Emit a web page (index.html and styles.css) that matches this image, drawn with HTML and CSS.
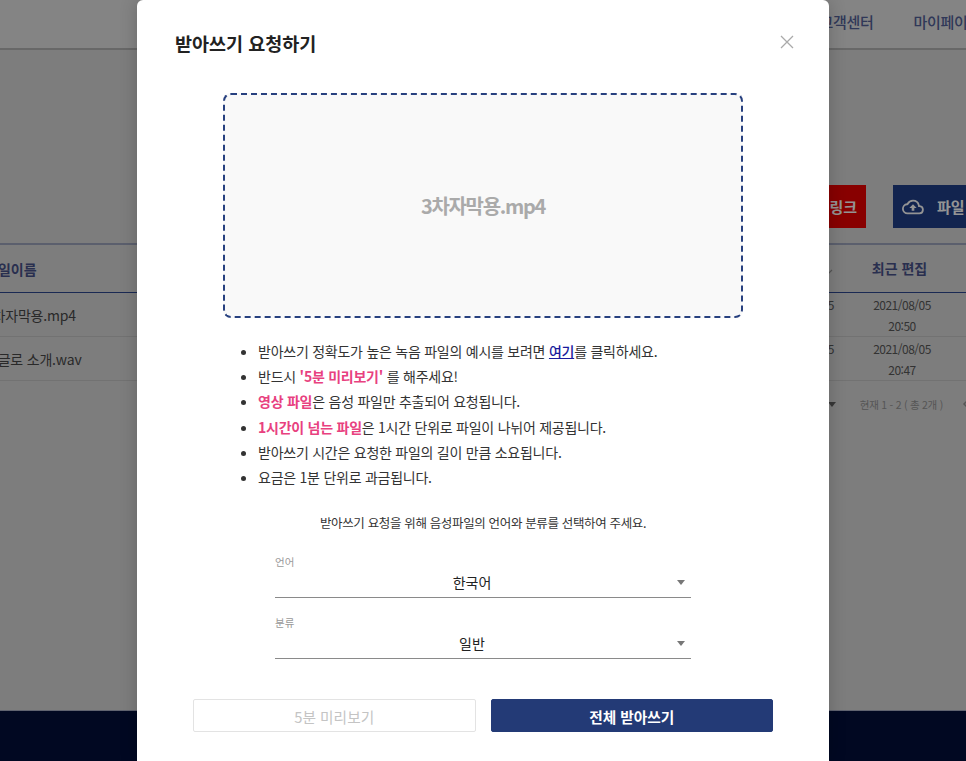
FILE: index.html
```html
<!DOCTYPE html>
<html lang="ko">
<head>
<meta charset="utf-8">
<title>받아쓰기 요청하기</title>
<link rel="stylesheet" href="styles.css">
</head>
<body>
<div class="page">
  <header class="topbar">
    <nav class="nav">
      <a class="nav-item">고객센터</a>
      <a class="nav-item">마이페이지</a>
    </nav>
  </header>
  <main class="main">
    <div class="toolbar">
      <button class="tool-btn tool-red">유튜브 링크</button>
      <button class="tool-btn tool-blue">
        <svg class="cloud" viewBox="0 0 24 24" width="22" height="22" aria-hidden="true"><path d="M19.35 10.04A7.49 7.49 0 0 0 12 4a7.5 7.5 0 0 0-6.65 4.04A6 6 0 0 0 6 20h13a5 5 0 0 0 .35-9.96zM19 18H6a4 4 0 0 1-.43-7.98l1.07-.11.5-.95A5.47 5.47 0 0 1 12 6a5.5 5.5 0 0 1 5.39 4.42l.3 1.5 1.53.11A3 3 0 0 1 19 18zM8 13h2.55v3h2.9v-3H16l-4-4z" fill="currentColor"/></svg>
        <span>파일 업로드</span>
      </button>
    </div>
    <div class="table">
      <div class="thead">
        <span class="cell-name">파일이름</span>
        <span class="cell-date sort"><svg viewBox="0 0 8 5" width="8" height="5" aria-hidden="true"><path d="M1 1l3 3 3-3" fill="none" stroke="currentColor" stroke-width="1.2"/></svg></span>
        <span class="cell-edit">최근 편집</span>
      </div>
      <div class="trow">
        <span class="cell-name">3차자막용.mp4</span>
        <span class="cell-date">2021/08/05<br>20:50</span>
        <span class="cell-edit">2021/08/05<br>20:50</span>
      </div>
      <div class="trow">
        <span class="cell-name">한글로 소개.wav</span>
        <span class="cell-date">2021/08/05<br>20:47</span>
        <span class="cell-edit">2021/08/05<br>20:47</span>
      </div>
      <div class="pager">
        <i class="pager-arrow"></i>
        <span class="pager-text">현재 1 - 2 ( 총 2개 )</span>
        <svg class="pager-prev" viewBox="0 0 10 12" width="10" height="12" aria-hidden="true"><path d="M7 1 2 6l5 5" fill="none" stroke="currentColor" stroke-width="1.5"/></svg>
      </div>
    </div>
  </main>
  <footer class="footer"></footer>
</div>

<div class="overlay"></div>

<section class="modal">
  <div class="modal-head">
    <h2 class="modal-title">받아쓰기 요청하기</h2>
    <svg class="modal-close" viewBox="0 0 14 14" width="14" height="14" aria-hidden="true"><path d="M1 1l12 12M13 1 1 13" fill="none" stroke="currentColor" stroke-width="1.3"/></svg>
  </div>
  <div class="dropzone">3차자막용.mp4</div>
  <ul class="notes">
    <li>받아쓰기 정확도가 높은 녹음 파일의 예시를 보려면 <a class="link">여기</a>를 클릭하세요.</li>
    <li>반드시 <b class="pink">'5분 미리보기'</b> 를 해주세요!</li>
    <li><b class="pink">영상 파일</b>은 음성 파일만 추출되어 요청됩니다.</li>
    <li><b class="pink">1시간이 넘는 파일</b>은 1시간 단위로 파일이 나뉘어 제공됩니다.</li>
    <li>받아쓰기 시간은 요청한 파일의 길이 만큼 소요됩니다.</li>
    <li>요금은 1분 단위로 과금됩니다.</li>
  </ul>
  <p class="guide">받아쓰기 요청을 위해 음성파일의 언어와 분류를 선택하여 주세요.</p>
  <div class="fields">
    <div class="field">
      <label class="field-label">언어</label>
      <div class="select">한국어</div>
    </div>
    <div class="field">
      <label class="field-label">분류</label>
      <div class="select">일반</div>
    </div>
  </div>
  <div class="actions">
    <button class="btn btn-off">5분 미리보기</button>
    <button class="btn btn-on">전체 받아쓰기</button>
  </div>
</section>
</body>
</html>
```

FILE: styles.css
```css
* { box-sizing: border-box; }
html, body { margin: 0; height: 761px; overflow: hidden; }
body {
  position: relative;
  font-family: "Noto Sans CJK KR", "Noto Sans", sans-serif;
  color: #222;
  background: #c0c0c0;
}

/* page behind the dialog */
.page { display: flex; flex-direction: column; height: 761px; overflow: hidden; background: #c0c0c0; }
.topbar {
  height: 50px;
  flex: none;
  background: #cbcbcb;
  border-bottom: 2px solid #a0a0a0;
  display: flex;
  justify-content: flex-end;
  overflow: hidden;
}
.nav { display: flex; gap: 40px; margin-right: -15px; padding-top: 10px; }
.nav-item { font-size: 15px; line-height: 24px; font-weight: 500; color: #4a5688; white-space: nowrap; letter-spacing: -0.3px; }
.main { flex: 1; overflow: hidden; }
.toolbar {
  display: flex;
  justify-content: flex-end;
  gap: 27px;
  margin-top: 135px;
  margin-right: -76px;
}
.tool-btn {
  height: 43px;
  border: 0;
  font: 700 15px/43px "Noto Sans CJK KR", sans-serif;
  color: #e4e4e4;
  white-space: nowrap;
}
.tool-red { width: 140px; background: #d20000; text-align: right; padding: 0 9px 0 0; }
.tool-blue { width: 149px; background: #1c387a; display: flex; align-items: center; gap: 13px; padding: 0 0 0 9px; }
.cloud { flex: none; }
.table { margin: 15px 0 0 -15px; border-top: 2px solid #8c92a8; }
.thead, .trow { display: flex; align-items: center; }
.thead { height: 48px; border-bottom: 1px solid #284080; font-size: 14px; font-weight: 700; color: #40497a; }
.trow { height: 44px; border-bottom: 1px solid #b0b0b0; font-size: 14px; letter-spacing: -0.2px; color: #404040; }
.cell-name { flex: 1; white-space: nowrap; }
.cell-date, .cell-edit { text-align: center; font-size: 12px; line-height: 21px; letter-spacing: -0.5px; color: #4f4f4f; }
.cell-date { width: 64px; margin-right: 25px; }
.cell-edit { width: 80px; margin-right: 24px; }
.thead .cell-edit { font-size: 14px; font-weight: 700; letter-spacing: 0; color: #40497a; padding-right: 5px; white-space: nowrap; }
.thead .sort { text-align: right; padding-right: 4px; color: #848484; line-height: 10px; }
.pager { display: flex; align-items: center; justify-content: flex-end; height: 46px; font-size: 10.5px; letter-spacing: -0.25px; color: #848484; }
.pager-arrow { width: 0; height: 0; border: 4px solid transparent; border-top: 5px solid #555; border-bottom: 0; margin-right: 24px; }
.pager-text { margin-right: 19px; white-space: nowrap; }
.pager-prev { margin-right: -6px; color: #848484; flex: none; }
.footer { height: 51px; flex: none; background: #030d35; border-top: 1px solid #9499ad; }

.overlay { position: absolute; inset: 0; background: rgba(0, 0, 0, .35); }

/* dialog */
.modal {
  position: absolute;
  left: 137px;
  top: 0;
  width: 692px;
  height: 761px;
  overflow: hidden;
  background: #fff;
  border-radius: 6px 6px 0 0;
  box-shadow: 0 0 18px rgba(0, 0, 0, .2);
  padding: 0 56px;
  display: flex;
  flex-direction: column;
  align-items: center;
}
.modal-head {
  align-self: stretch;
  margin: 0 -18px;
  height: 93px;
  flex: none;
  display: flex;
  justify-content: space-between;
  padding: 30px 0 0;
}
.modal-title { margin: 0; font-size: 18.5px; line-height: 27px; font-weight: 700; color: #222; }
.modal-close { color: #aaa; margin: 5px -3px 0 0; }
.dropzone {
  width: 520px;
  height: 225px;
  flex: none;
  border: 2px dashed #27407f;
  border-radius: 8px;
  background: #f9f9f9;
  display: flex;
  align-items: center;
  justify-content: center;
  font-size: 20px;
  font-weight: 700;
  letter-spacing: -1.3px;
  color: #aaa;
}
.notes {
  align-self: stretch;
  list-style: disc;
  margin: 21px 0 0;
  padding: 0 0 0 65px;
  font-size: 14px;
  line-height: 25.2px;
  letter-spacing: -0.25px;
  color: #333;
}
.link { color: #1a1a9c; font-weight: 500; text-decoration: underline; }
.pink { color: #e8417f; font-weight: 700; }
.guide { margin: 23px 0 0; font-size: 12.5px; line-height: 20px; letter-spacing: -0.35px; color: #333; }
.fields { width: 416px; margin-top: 21px; display: flex; flex-direction: column; gap: 17px; }
.field { display: flex; flex-direction: column; }
.field-label { font-size: 10.5px; line-height: 16px; color: #999; }
.select {
  position: relative;
  height: 28px;
  line-height: 24px;
  font-size: 14px;
  text-align: center;
  color: #222;
  padding-right: 22px;
  border-bottom: 1px solid #8a8a8a;
}
.select::after {
  content: "";
  position: absolute;
  right: 6px;
  top: 10px;
  border: 4.5px solid transparent;
  border-top: 5px solid #777;
  border-bottom: 0;
}
.actions { width: 580px; display: flex; gap: 15px; margin-top: 40px; flex: none; }
.btn {
  flex: 1;
  height: 33px;
  border-radius: 2px;
  font: 14.7px/31px "Noto Sans CJK KR", sans-serif;
}
.btn-off { background: #fff; border: 1px solid #e3e3e3; color: #c4c4c4; }
.btn-on { background: #233a76; border: 1px solid #233a76; color: #fff; font-weight: 700; }
```
